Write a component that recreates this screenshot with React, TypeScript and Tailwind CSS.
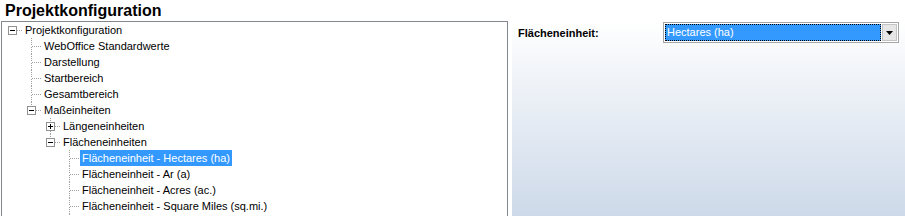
import React from "react";

type Row = {
  level: number;
  text: string;
  box?: "plus" | "minus";
  first?: boolean;
  last?: boolean;
  selected?: boolean;
};

const ROWS: Row[] = [
  { level: 0, text: "Projektkonfiguration", box: "minus", first: true, last: true },
  { level: 1, text: "WebOffice Standardwerte" },
  { level: 1, text: "Darstellung" },
  { level: 1, text: "Startbereich" },
  { level: 1, text: "Gesamtbereich" },
  { level: 1, text: "Maßeinheiten", box: "minus", last: true },
  { level: 2, text: "Längeneinheiten", box: "plus" },
  { level: 2, text: "Flächeneinheiten", box: "minus", last: true },
  { level: 3, text: "Flächeneinheit - Hectares (ha)", selected: true },
  { level: 3, text: "Flächeneinheit - Ar (a)" },
  { level: 3, text: "Flächeneinheit - Acres (ac.)" },
  { level: 3, text: "Flächeneinheit - Square Miles (sq.mi.)" },
  // next sibling is scrolled out of view, only its connector line peeks in
  { level: 3, text: "" },
];

// one 19x16 connector cell: dotted lines + optional expand box
function Connector({ row }: { row: Row }) {
  const dot = { stroke: "#a0a0a0", strokeWidth: 1, strokeDasharray: "1 1" };
  const top = row.first ? null : (
    <line x1={9.5} y1={0} x2={9.5} y2={row.box ? 4 : 8} {...dot} />
  );
  const bottom = row.last ? null : (
    <line x1={9.5} y1={row.box ? 13 : 9} x2={9.5} y2={16} {...dot} />
  );
  return (
    <svg width="19" height="16" className="shrink-0" shapeRendering="crispEdges">
      {top}
      {bottom}
      <line x1={row.box ? 14 : 10} y1={8.5} x2={19} y2={8.5} {...dot} />
      {row.box && (
        <g>
          <rect x={5.5} y={4.5} width={8} height={8} fill="#fff" stroke="#919191" />
          <line x1={7} y1={8.5} x2={12} y2={8.5} stroke="#000" />
          {row.box === "plus" && <line x1={9.5} y1={6} x2={9.5} y2={11} stroke="#000" />}
        </g>
      )}
    </svg>
  );
}

function TreeRow({ row }: { row: Row }) {
  return (
    <div className="flex h-[16px] items-center">
      {Array.from({ length: row.level }).map((_, i) => (
        <div key={i} className="w-[19px] shrink-0" />
      ))}
      <Connector row={row} />
      {row.text && (
        <span
          className={
            "ml-[1px] whitespace-nowrap px-[2px] leading-[16px] " +
            (row.selected ? "bg-[#3399ff] text-white" : "text-black")
          }
        >
          {row.text}
        </span>
      )}
    </div>
  );
}

export default function App() {
  return (
    <div className="h-[216px] w-[905px] overflow-hidden bg-white font-['Liberation_Sans',Arial,sans-serif] text-[11px] text-black">
      <div className="h-[21px] pl-[5px] text-[16px] font-bold leading-[21px]">
        Projektkonfiguration
      </div>

      <div className="flex">
        {/* tree */}
        <div className="ml-[1px] h-[260px] w-[507px] border border-[#828790] bg-white pl-[1px]">
          {ROWS.map((r, i) => (
            <TreeRow key={i} row={r} />
          ))}
        </div>

        {/* property panel */}
        <div className="ml-[4px] h-[195px] flex-1 bg-gradient-to-b from-white to-[#cdd9e9] pl-[6px] pt-[1px]">
          <div className="flex items-center">
            <div className="w-[145px] pt-[2px] font-bold">Flächeneinheit:</div>
            <div className="flex h-[21px] w-[236px] border border-[#a5a5a5] bg-white p-[1px]">
              <div className="flex-1 bg-[#3399ff] outline-1 outline-dotted outline-black -outline-offset-1 pl-[2px] leading-[17px] text-white">
                Hectares (ha)
              </div>
              <div className="ml-[1px] flex w-[15px] items-center justify-center border border-[#c4c4c4] bg-[#e6e6e6]">
                <svg width="7" height="4" viewBox="0 0 7 4">
                  <path d="M0 0h7L3.5 4z" fill="#000" />
                </svg>
              </div>
            </div>
          </div>
        </div>
      </div>
    </div>
  );
}
